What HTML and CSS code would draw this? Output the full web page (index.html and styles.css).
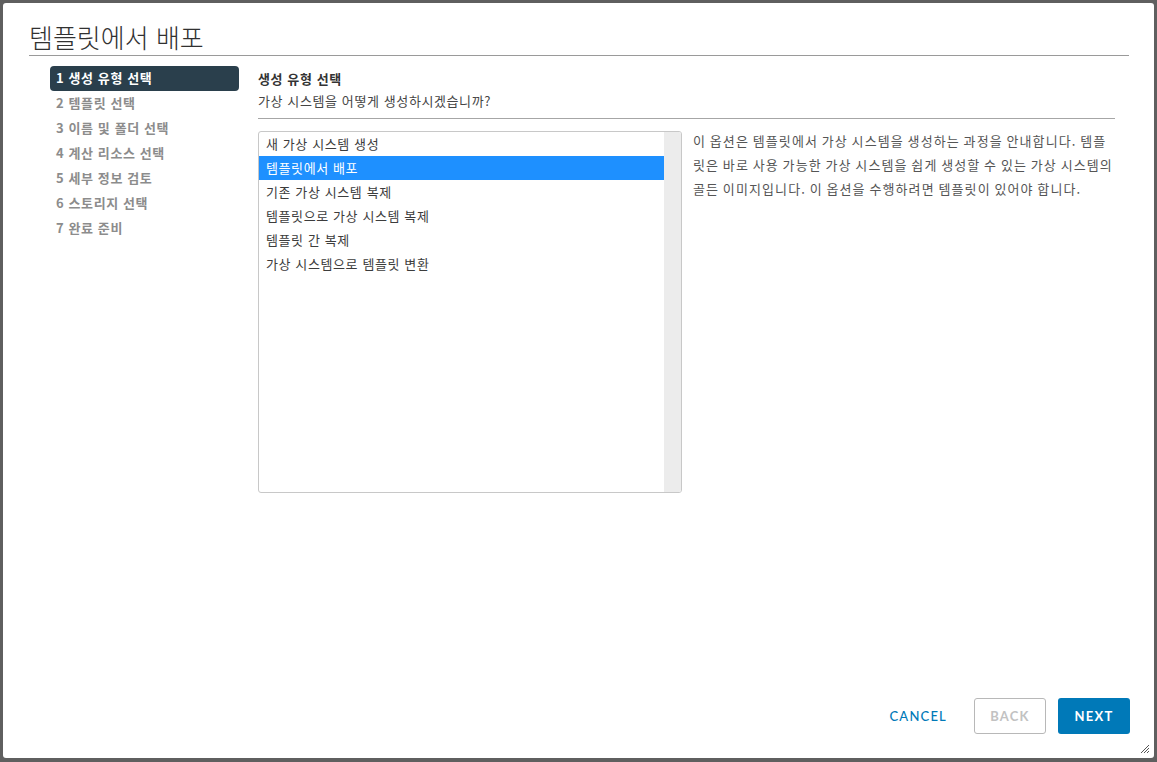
FILE: index.html
```html
<!DOCTYPE html>
<html lang="ko">
<head>
    <meta charset="UTF-8">
    <meta name="viewport" content="width=device-width, initial-scale=1.0">
    <title>템플릿에서 배포</title>
    <link rel="stylesheet" href="styles.css">
</head>
<body>
    <div class="modal">
        <h1 class="modal-title">템플릿에서 배포</h1>

        <div class="modal-body">
            <ul class="steps">
                <li class="step active">1 생성 유형 선택</li>
                <li class="step">2 템플릿 선택</li>
                <li class="step">3 이름 및 폴더 선택</li>
                <li class="step">4 계산 리소스 선택</li>
                <li class="step">5 세부 정보 검토</li>
                <li class="step">6 스토리지 선택</li>
                <li class="step">7 완료 준비</li>
            </ul>

            <div class="page">
                <div class="page-header">
                    <div class="page-title">생성 유형 선택</div>
                    <div class="page-subtitle">가상 시스템을 어떻게 생성하시겠습니까?</div>
                </div>

                <div class="page-content">
                    <div class="listbox">
                        <ul class="options">
                            <li class="option">새 가상 시스템 생성</li>
                            <li class="option selected">템플릿에서 배포</li>
                            <li class="option">기존 가상 시스템 복제</li>
                            <li class="option">템플릿으로 가상 시스템 복제</li>
                            <li class="option">템플릿 간 복제</li>
                            <li class="option">가상 시스템으로 템플릿 변환</li>
                        </ul>
                        <div class="scroll-track"></div>
                    </div>
                    <p class="description">이 옵션은 템플릿에서 가상 시스템을 생성하는 과정을 안내합니다. 템플릿은 바로 사용 가능한 가상 시스템을 쉽게 생성할 수 있는 가상 시스템의 골든 이미지입니다. 이 옵션을 수행하려면 템플릿이 있어야 합니다.</p>
                </div>
            </div>
        </div>

        <div class="modal-footer">
            <button class="btn btn-link">CANCEL</button>
            <button class="btn btn-outline" disabled>BACK</button>
            <button class="btn btn-primary">NEXT</button>
        </div>

        <svg class="resize-grip" width="10" height="10" viewBox="0 0 10 10">
            <path d="M9 1 L1 9 M9 4 L4 9 M9 7 L7 9" stroke="#555" stroke-width="1" fill="none"/>
        </svg>
    </div>
</body>
</html>
```

FILE: styles.css
```css
* {
    margin: 0;
    padding: 0;
    box-sizing: border-box;
}

body {
    background-color: #5f5f5f;
    font-family: "Noto Sans", "Noto Sans CJK KR", sans-serif;
    height: 762px;
    overflow: hidden;
    padding: 3px 3px 4px 3px;
}

.modal {
    position: relative;
    background-color: #fff;
    border-radius: 3px;
    height: 755px;
    display: flex;
    flex-direction: column;
    padding: 18px 24px 24px 26px;
}

.modal-title {
    font-family: "Noto Sans CJK KR", sans-serif;
    font-size: 26px;
    font-weight: 300;
    line-height: 32px;
    color: #313131;
    padding-bottom: 2px;
    border-bottom: 1px solid #9a9a9a;
    margin-right: 1px;
}

.modal-body {
    flex: 1;
    display: flex;
    padding-top: 10px;
}

.steps {
    list-style: none;
    width: 189px;
    margin-left: 21px;
    display: flex;
    flex-direction: column;
}

.step {
    height: 25px;
    line-height: 24px;
    padding-left: 6px;
    font-family: "Noto Sans CJK KR", sans-serif;
    font-size: 13px;
    font-weight: 700;
    letter-spacing: 0.6px;
    color: #8c8c8c;
    border-radius: 4px;
}

.step.active {
    background-color: #2a3f4c;
    color: #fff;
}

.page {
    flex: 1;
    margin-left: 19px;
    margin-right: 15px;
}

.page-header {
    border-bottom: 1px solid #a6a6a6;
    padding-top: 2px;
    padding-bottom: 6px;
}

.page-title {
    font-family: "Noto Sans CJK KR", sans-serif;
    font-size: 13px;
    font-weight: 700;
    letter-spacing: 0.6px;
    color: #333;
    line-height: 22px;
}

.page-subtitle {
    font-family: "Noto Sans CJK KR", sans-serif;
    font-size: 13px;
    letter-spacing: 0.6px;
    color: #454545;
    line-height: 22px;
}

.page-content {
    display: flex;
    margin-top: 12px;
}

.listbox {
    width: 424px;
    height: 362px;
    border: 1px solid #c8c8c8;
    border-radius: 3px;
    display: flex;
    overflow: hidden;
}

.options {
    list-style: none;
    flex: 1;
}

.option {
    height: 24px;
    line-height: 24px;
    padding-left: 7px;
    font-family: "Noto Sans CJK KR", sans-serif;
    font-size: 13px;
    letter-spacing: 0.6px;
    color: #3c3c3c;
}

.option.selected {
    background-color: #1e90ff;
    color: #fff;
}

.scroll-track {
    width: 17px;
    background-color: #ececec;
}

.description {
    flex: 1;
    padding-left: 11px;
    margin-top: -2px;
    font-family: "Noto Sans CJK KR", sans-serif;
    font-size: 13px;
    line-height: 24px;
    letter-spacing: 1.1px;
    word-spacing: -1px;
    color: #555;
}

.modal-footer {
    display: flex;
    justify-content: flex-end;
    align-items: center;
    gap: 12px;
}

.btn {
    height: 36px;
    min-width: 72px;
    padding: 0 12px;
    font-family: "Lato", "Noto Sans", sans-serif;
    font-size: 13px;
    font-weight: 700;
    letter-spacing: 1.2px;
    border-radius: 3px;
    background: none;
    border: 1px solid transparent;
    cursor: pointer;
}

.btn-link {
    color: #0079b8;
    font-weight: 500;
    margin-right: 2px;
}

.btn-outline {
    border-color: #b8b8b8;
    color: #c2c2c2;
    background-color: #fff;
}

.btn-primary {
    background-color: #0079b8;
    color: #fff;
}

.resize-grip {
    position: absolute;
    right: 4px;
    bottom: 4px;
}
```
